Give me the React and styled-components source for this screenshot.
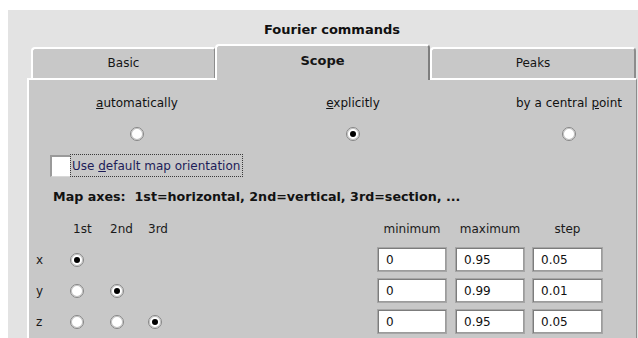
import React from "react";
import styled, { createGlobalStyle } from "styled-components";

const GlobalStyle = createGlobalStyle`
  html, body {
    margin: 0;
    padding: 0;
    background: #ffffff;
    overflow: hidden;
  }

  body {
    font-family: "DejaVu Sans", "Liberation Sans", sans-serif;
    font-size: 12px;
    color: #111;
  }
`;

const Window = styled("div")`
  box-sizing: border-box;
  margin: 10px 0 0 8px;
  width: 648px;
  height: 328px;
  padding: 0 19px;
  background: #e3e3e3;
  display: flex;
  flex-direction: column;
`;

const Title = styled("div")`
  box-sizing: border-box;
  height: 34px;
  padding-top: 6px;
  line-height: 28px;
  text-align: center;
  font-size: 13px;
  font-weight: bold;
  color: #101010;
`;

const TabBar = styled("div")`
  display: flex;
  align-items: flex-end;
  height: 34px;
`;

const Tab = styled("div")`
  box-sizing: border-box;
  position: relative;
  flex: none;
  width: ${(p) => p.$width}px;
  height: ${(p) => (p.$active ? 36 : 31)}px;
  margin-left: ${(p) => p.$offset || 0}px;
  margin-bottom: ${(p) => (p.$active ? -2 : 0)}px;
  z-index: ${(p) => (p.$active ? 1 : 0)};
  background: #c8c8c8;
  border-top: 2px solid #ffffff;
  border-left: 2px solid #ffffff;
  border-right: 2px solid ${(p) => (p.$active ? "#7e7e7e" : "#8c8c8c")};
  border-radius: 4px 4px 0 0;
  display: flex;
  align-items: center;
  justify-content: center;
  padding-bottom: ${(p) => (p.$active ? 6 : 2)}px;
  font-size: ${(p) => (p.$active ? 13 : 12)}px;
  font-weight: ${(p) => (p.$active ? "bold" : "normal")};
  color: #151515;
`;

const Panel = styled("div")`
  flex: 1;
  background: #c8c8c8;
  border-top: 2px solid #ffffff;
  border-left: 2px solid #ffffff;
  border-right: 1px solid #8c8c8c;
  overflow: hidden;
`;

const ModeRow = styled("div")`
  display: grid;
  grid-template-columns: repeat(3, 216px);
  padding-top: 15px;
`;

const ModeOption = styled("div")`
  display: flex;
  flex-direction: column;
  align-items: center;
  gap: 16px;
  line-height: 16px;
  white-space: nowrap;
`;

const Mnemonic = styled("span")`
  text-decoration: underline;
`;

const Radio = styled("span")`
  box-sizing: border-box;
  display: grid;
  place-items: center;
  width: 14px;
  height: 14px;
  border-radius: 50%;
  background: #ffffff;
  border: 1px solid #858585;
  box-shadow: inset 0 0 0 1px #c4c4c4;
  justify-self: ${(p) => p.$align || "center"};

  &::after {
    content: "";
    display: ${(p) => (p.$checked ? "block" : "none")};
    width: 6px;
    height: 6px;
    border-radius: 50%;
    background: #000000;
  }
`;

const CheckRow = styled("div")`
  display: flex;
  align-items: center;
  margin-top: 13px;
  padding-left: 21px;
  height: 23px;
`;

const CheckBox = styled("span")`
  box-sizing: border-box;
  width: 20px;
  height: 22px;
  background: #ffffff;
  border-top: 2px solid #9a9a9a;
  border-left: 2px solid #9a9a9a;
  border-bottom: 1px solid #d8d8d8;
`;

const FocusLabel = styled("span")`
  box-sizing: border-box;
  height: 23px;
  display: flex;
  align-items: center;
  padding: 0 2px 0 1px;
  border: 1px dotted #3a3a3a;
  color: #1d1d58;
  white-space: nowrap;
`;

const AxesNote = styled("div")`
  margin-top: 12px;
  padding-left: 24px;
  line-height: 16px;
  font-size: 12.7px;
  font-weight: bold;
  color: #121212;
  white-space: pre;
`;

const AxesGrid = styled("div")`
  display: grid;
  grid-template-columns: 41px 40px 38px 40px 189px 78px 77px 71px;
  grid-auto-rows: 31px;
  align-items: center;
  margin-top: 8px;
`;

const HeadCell = styled("div")`
  padding-left: ${(p) => p.$pad || 0}px;
  text-align: ${(p) => (p.$center ? "center" : "left")};
  margin-right: ${(p) => (p.$center ? p.$trim || 0 : 0)}px;
  color: #1a1a1a;
  white-space: nowrap;
`;

const AxisName = styled("div")`
  padding-left: 7px;
  color: #1a1a1a;
`;

const Field = styled("div")`
  box-sizing: border-box;
  width: ${(p) => p.$width || 70}px;
  height: 25px;
  background: #ffffff;
  border: 1px solid #a6a6a6;
  box-shadow: inset 1px 1px 0 #7c7c7c, inset -1px -1px 0 #9c9c9c;
  display: flex;
  align-items: center;
  padding-left: 8px;
  color: #101010;
`;

const axes = [
  { name: "x", pick: 0, min: "0", max: "0.95", step: "0.05" },
  { name: "y", pick: 1, min: "0", max: "0.99", step: "0.01" },
  { name: "z", pick: 2, min: "0", max: "0.95", step: "0.05" },
];

const App = () => {
  return (
    <>
      <GlobalStyle />
      <Window>
        <Title>Fourier commands</Title>
        <TabBar>
          <Tab $width={185} $offset={4}>Basic</Tab>
          <Tab $width={215} $offset={-1} $active>Scope</Tab>
          <Tab $width={206}>Peaks</Tab>
        </TabBar>
        <Panel>
          <ModeRow>
            <ModeOption>
              <span>
                <Mnemonic>a</Mnemonic>utomatically
              </span>
              <Radio />
            </ModeOption>
            <ModeOption>
              <span>
                <Mnemonic>e</Mnemonic>xplicitly
              </span>
              <Radio $checked />
            </ModeOption>
            <ModeOption>
              <span>
                by a central <Mnemonic>p</Mnemonic>oint
              </span>
              <Radio />
            </ModeOption>
          </ModeRow>

          <CheckRow>
            <CheckBox />
            <FocusLabel>
              <span>
                Use <Mnemonic>d</Mnemonic>efault map orientation
              </span>
            </FocusLabel>
          </CheckRow>

          <AxesNote>{"Map axes:  1st=horizontal, 2nd=vertical, 3rd=section, ..."}</AxesNote>

          <AxesGrid>
            <div />
            <HeadCell $pad={3}>1st</HeadCell>
            <HeadCell>2nd</HeadCell>
            <HeadCell>3rd</HeadCell>
            <div />
            <HeadCell $center $trim={8}>minimum</HeadCell>
            <HeadCell $center $trim={7}>maximum</HeadCell>
            <HeadCell $center>step</HeadCell>

            {axes.map((a, i) => (
              <React.Fragment key={a.name}>
                <AxisName>{a.name}</AxisName>
                {[0, 1, 2].map((c) =>
                  c <= i ? (
                    <Radio key={c} $align="start" $checked={a.pick === c} />
                  ) : (
                    <div key={c} />
                  )
                )}
                <div />
                <Field>{a.min}</Field>
                <Field>{a.max}</Field>
                <Field $width={71}>{a.step}</Field>
              </React.Fragment>
            ))}
          </AxesGrid>
        </Panel>
      </Window>
    </>
  );
};

export default App;
